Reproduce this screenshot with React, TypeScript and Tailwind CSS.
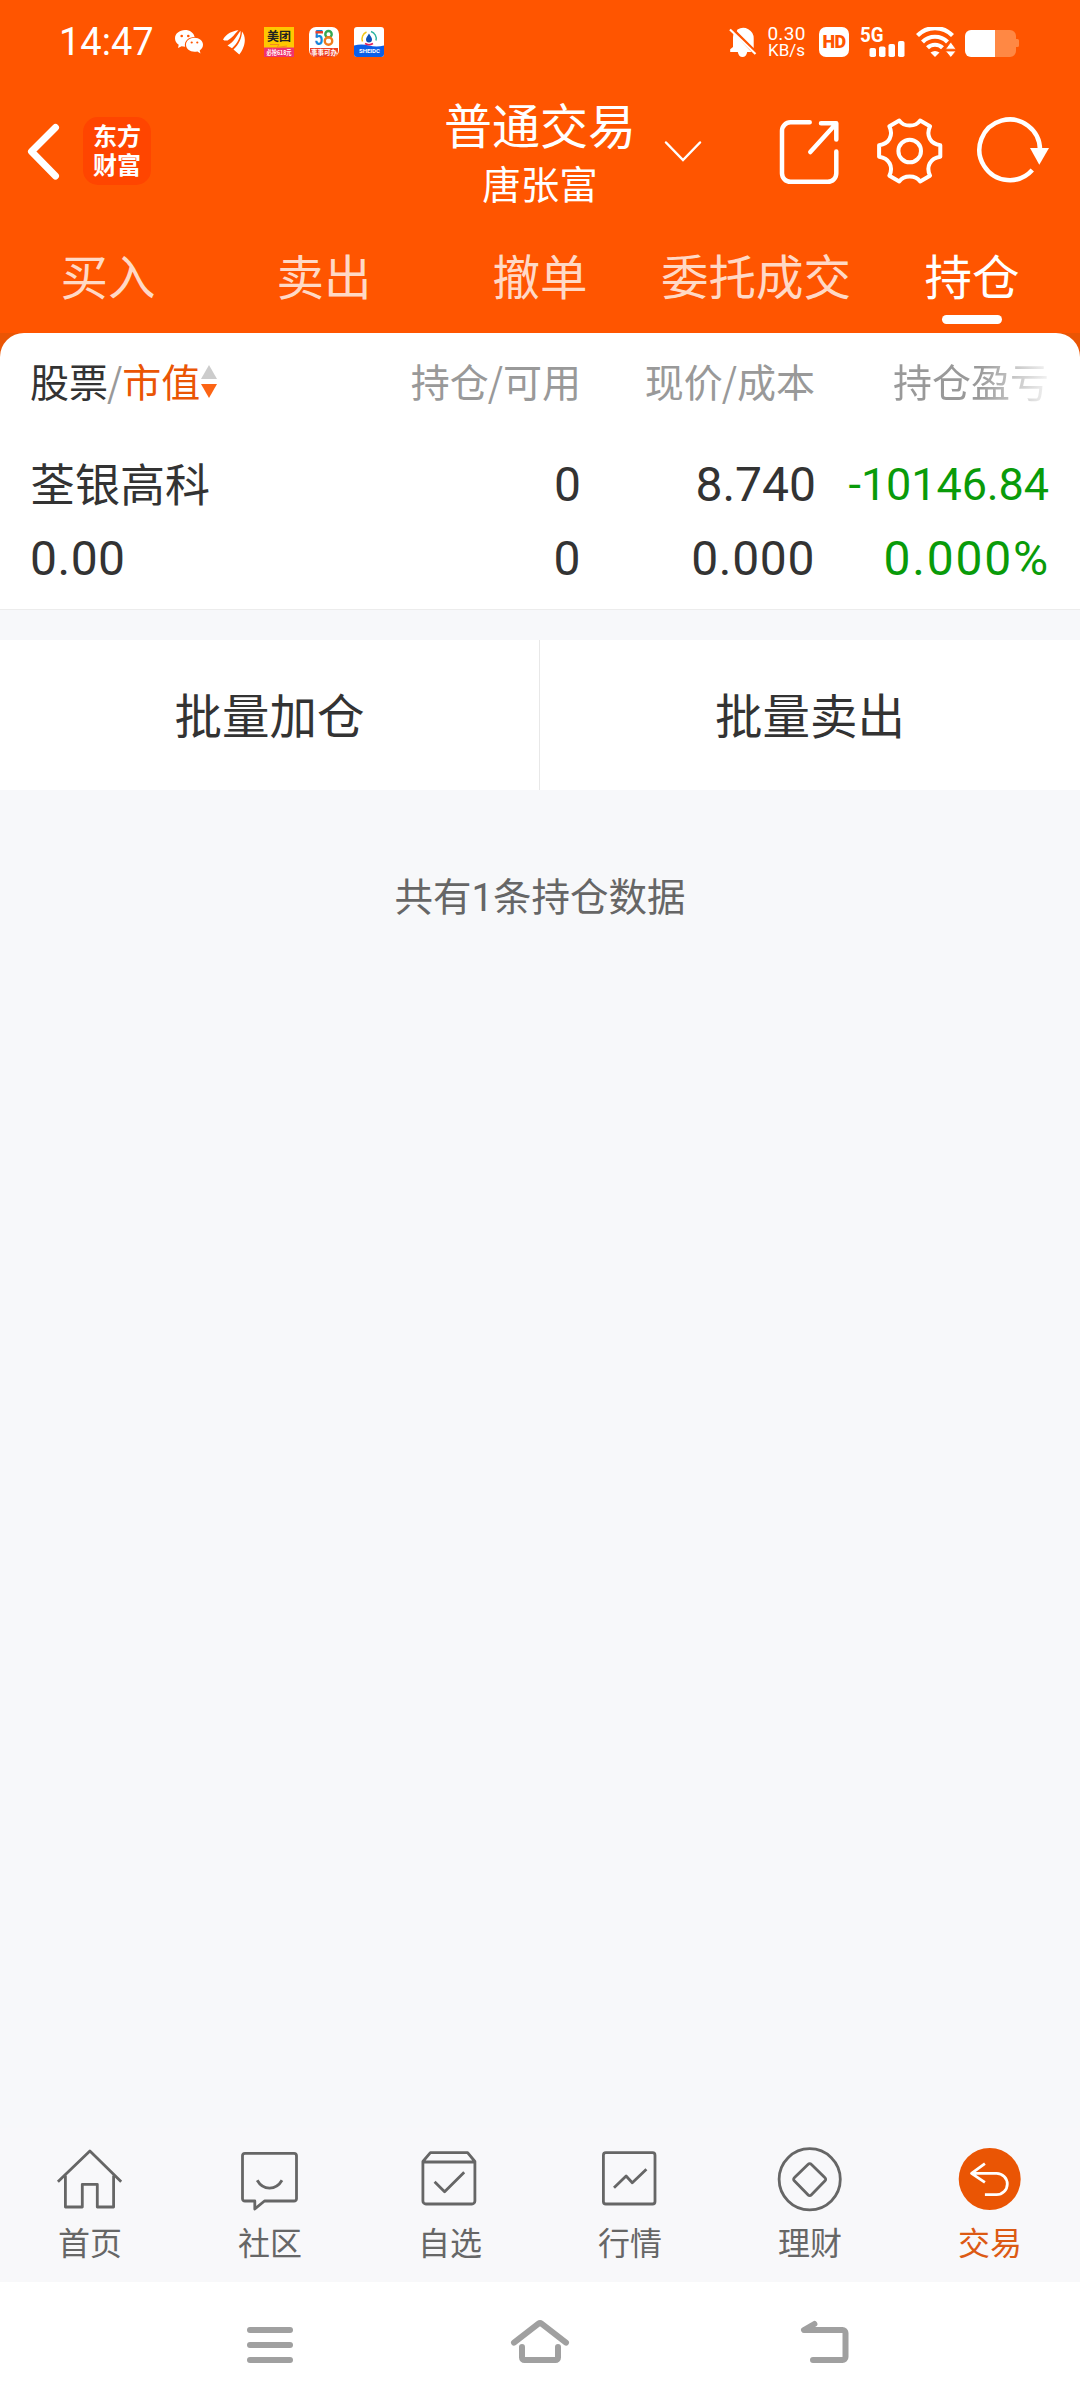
import type {ReactNode} from "react";

type Tab = {
    label: string;
    active?: boolean;
}

type NavItem = {
    label: string;
    icon: ReactNode;
    active?: boolean;
}

const tabs: Tab[] = [
    {label: "买入"},
    {label: "卖出"},
    {label: "撤单"},
    {label: "委托成交"},
    {label: "持仓", active: true},
];

const navItems: NavItem[] = [
    {
        label: "首页",
        icon: (
            <>
                <path d="M2.9 35.7 34.9 5l31.3 30.7"/>
                <path d="M10.4 29.5V61h16.9V38.3h15V61h16.3V29.5"/>
            </>
        ),
    },
    {
        label: "社区",
        icon: (
            <>
                <path d="M10 7.3h49a2.5 2.5 0 0 1 2.5 2.5v43A2.5 2.5 0 0 1 59 55H29.5l-9.7 8v-8H10a2.5 2.5 0 0 1-2.5-2.2v-43A2.5 2.5 0 0 1 10 7.3Z"/>
                <path d="M22.2 34.3c5.8 10.4 18.8 10.4 24.8 0"/>
            </>
        ),
    },
    {
        label: "自选",
        icon: (
            <>
                <path d="M7.9 15.5 15.4 6.7h37.2l7.3 8.8V55a3 3 0 0 1-3 3h-46a3 3 0 0 1-3-3ZM7.9 16h52"/>
                <path d="m19.6 35.7 10 10 19.6-19.4"/>
            </>
        ),
    },
    {
        label: "行情",
        icon: (
            <>
                <rect x="8.4" y="6.7" width="51.6" height="51.3" rx="2.5"/>
                <path d="M19 41.7 31.1 30l6.2 6.7 14.1-13.4"/>
            </>
        ),
    },
    {
        label: "理财",
        icon: (
            <>
                <circle cx="34.7" cy="33.3" r="30.6"/>
                <path d="M36.2 18.3 50 31.8a2 2 0 0 1 0 3L36.2 49a2 2 0 0 1-3 0L19.3 34.8a2 2 0 0 1 0-3l13.9-13.5a2 2 0 0 1 3 0Z"/>
            </>
        ),
    },
    {
        label: "交易",
        active: true,
        icon: (
            <>
                <circle cx="34.7" cy="33" r="31" fill="#ea5504" stroke="none"/>
                <path stroke="#fff" d="m29.9 17.7-13.4 9.6 13.4 9M16.5 27.3h25.1a10.7 10.7 0 0 1 0 21.4H29.9"/>
            </>
        ),
    },
];

function StatusBar() {
    return (
        <div className="flex h-[84px] items-center justify-between pl-[59px] pr-[61px] font-['Roboto',sans-serif] text-white">
            <div className="flex items-center">
                <span className="w-[116px] text-[38px] leading-[42px]">14:47</span>
                <svg width="28" height="24" viewBox="0 0 28 24" fill="#fff">
                    <path d="M10 0C4.500 0 0 3.600 0 8.300c0 2.700 1.400 5 3.700 6.500L3 18l3.600-1.800c1.200.3 2.300.5 3.500.5-1.300-5.500 3.500-9.700 9.500-9.700C18.800 2.700 14.900 0 10 0Z"/>
                    <path d="M19.500 7.800c-4.700 0-8.500 3.100-8.500 7s3.800 7 8.500 7c1 0 2-.1 2.900-.4L25.500 23.500l-.8-3c2-1.400 3.300-3.300 3.300-5.700 0-3.900-3.800-7-8.500-7Z"/>
                    <g fill="#ff5500">
                        <circle cx="6.700" cy="6" r="1.300"/>
                        <circle cx="13.300" cy="6" r="1.300"/>
                        <circle cx="16.700" cy="12.500" r="1.100"/>
                        <circle cx="22.300" cy="12.500" r="1.100"/>
                    </g>
                </svg>
                <svg className="ml-[20px]" width="22" height="25" viewBox="0 0 22 25" fill="#fff">
                    <path d="M0 9.500C4 3.500 9 1 15.500.3 12 3.500 10 7.500 4.500 10.500 2.500 10.500 1.500 11 0 9.500Z"/>
                    <path d="M4.500 15.500C11 12 13.500 6 17.500.8c.8 5-3 12.700-8.500 17.400Z"/>
                    <path d="M10.500 19.500C16 14.500 18.800 8 19 1.500c5.500 7 2 17-2.700 23Z"/>
                </svg>
                <svg className="ml-[19px] overflow-visible" width="30" height="30" viewBox="0 0 30 30">
                    <path fill="#ffc800" d="M0 0h30v22H0z"/>
                    <path fill="#f0326e" d="M0 20.500h30V30H0z"/>
                    <path d="M6 17.500h9l-2 3 10-1.500" stroke="#f58a1f" fill="none"/>
                    <text x="15" y="14" textAnchor="middle" fontSize="12" fontWeight="700" fill="#222"
                          fontFamily="Noto Sans CJK SC, sans-serif">美团</text>
                    <text x="15" y="27.700" textAnchor="middle" fontSize="6.500" fontWeight="700" fill="#fff"
                          fontFamily="Noto Sans CJK SC, sans-serif" textLength="25" lengthAdjust="spacingAndGlyphs">必抢618元</text>
                </svg>
                <svg className="ml-[15px] overflow-visible" width="30" height="30" viewBox="0 0 30 30">
                    <rect width="30" height="30" rx="7" fill="#fff"/>
                    <path fill="#ee4023" d="M1 21h28v3a6 6 0 0 1-6 6H7a6 6 0 0 1-6-6Z"/>
                    <text x="5.300" y="18.300" fontSize="20" fontWeight="700" fill="#1685d9"
                          fontFamily="Roboto, sans-serif" textLength="9" lengthAdjust="spacingAndGlyphs">5</text>
                    <path d="M6.500 5.300h7.500" stroke="#e8402a" strokeWidth="2.400"/>
                    <circle cx="19.500" cy="7.200" r="3.200" fill="none" stroke="#35a852" strokeWidth="2.400"/>
                    <circle cx="19.500" cy="14" r="3.700" fill="none" stroke="#f07c1c" strokeWidth="2.400"/>
                    <text x="15" y="28" textAnchor="middle" fontSize="6.500" fontWeight="700" fill="#fff"
                          fontFamily="Noto Sans CJK SC, sans-serif">事事可办</text>
                </svg>
                <svg className="ml-[15px]" width="30" height="30" viewBox="0 0 30 30">
                    <rect width="30" height="30" rx="3" fill="#fff"/>
                    <path fill="#0b5fe8" d="M0 18.500q7.500-2 15 0t15 0V27a3 3 0 0 1-3 3H3a3 3 0 0 1-3-3Z"/>
                    <g fill="none" strokeWidth="1.500">
                        <path d="M8.500 14.500a7.500 7.500 0 0 1 4-9.500" stroke="#f0c419"/>
                        <path d="M17 4.500a7.500 7.500 0 0 1 5 9" stroke="#2fb5a0"/>
                        <path d="M11 16.500a7.500 7.500 0 0 0 8 0" stroke="#e0245e"/>
                    </g>
                    <path fill="#0b4fb8" d="M15 6.500c1.800 3 3 4.300 3 6a3 3 0 0 1-6 0c0-1.700 1.200-3 3-6Z"/>
                    <text x="15.500" y="26.300" textAnchor="middle" fontSize="6" fontWeight="700" fill="#fff"
                          fontFamily="Roboto, sans-serif">SHEIDC</text>
                </svg>
            </div>
            <div className="flex items-center">
                <svg width="28" height="30" viewBox="0 0 28 30" fill="#fff">
                    <path d="M8.500 2.500a10.500 10.500 0 0 1 16.200 9V21L7.800 4.300c.2-.7.400-1.200.7-1.800Z"/>
                    <path d="M4 10.500c0-1.500.3-2.800.7-4L22.500 25h-4.300c-.5 3-2.200 5-4.700 5s-4.200-2-4.700-5H1.200v-2.800L4 20Z"/>
                    <path d="m1 2.500 25.500 24.500" stroke="#fff" strokeWidth="2.200"/>
                </svg>
                <div className="ml-[9px] flex w-[41px] flex-col items-center text-[19px] leading-[17px] tracking-[0.3px]">
                    <span>0.30</span>
                    <span className="text-[17px] tracking-normal">KB/s</span>
                </div>
                <div className="ml-[12px] flex size-[30px] items-center justify-center rounded-[7px] bg-white text-[18px] font-black leading-none tracking-[-0.6px] text-[#ff5500]">
                    HD
                </div>
                <svg className="ml-[11px] overflow-visible" width="46" height="30" viewBox="0 0 46 30" fill="#fff">
                    <text x="0" y="14.500" fontSize="19.500" fontWeight="700" fontFamily="Roboto, sans-serif"
                          textLength="23.500" lengthAdjust="spacingAndGlyphs">5G</text>
                    <rect x="9.500" y="21" width="6.500" height="9" rx="1.800"/>
                    <rect x="19" y="19.500" width="6.500" height="10.500" rx="1.800"/>
                    <rect x="28.500" y="17" width="6.500" height="13" rx="1.800"/>
                    <rect x="38" y="14" width="6.500" height="16" rx="1.800"/>
                </svg>
                <svg className="ml-[10px]" width="40" height="30" viewBox="0 0 40 30">
                    <g fill="none" stroke="#fff" strokeWidth="4.200">
                        <path d="M1.500 8.500a24.500 24.500 0 0 1 35 0"/>
                        <path d="M6.500 15a17.500 17.500 0 0 1 25 0"/>
                        <path d="M11.500 20.800a10.700 10.700 0 0 1 15 0"/>
                    </g>
                    <path fill="#fff" d="M14.500 25.500q4.500-3 9 0L19 30Z"/>
                    <path fill="#fff" stroke="#ff5500" strokeWidth=".800" d="M29.500 22.200 34.800 15l5.200 7.200ZM29.500 24 34.800 30.500 40 24Z"/>
                </svg>
                <svg className="ml-[9px]" width="54" height="30" viewBox="0 0 54 30">
                    <path fill="#ff8844" d="M30 3h15a6 6 0 0 1 6 6v3h1.500a1.500 1.500 0 0 1 1.500 1.500v5a1.500 1.500 0 0 1-1.500 1.500H51v4a6 6 0 0 1-6 6H30Z"/>
                    <path fill="#fff" d="M30 3H6a6 6 0 0 0-6 6v15a6 6 0 0 0 6 6h24Z"/>
                </svg>
            </div>
        </div>
    );
}

function TitleBar() {
    return (
        <div className="grid h-[132px] grid-cols-3 items-center pt-[2px] text-white">
            <div className="flex items-center pl-[25px]">
                <svg width="36" height="60" viewBox="0 0 36 60" fill="none" stroke="#fff" strokeWidth="7"
                     strokeLinecap="round" strokeLinejoin="round">
                    <path d="M30.500 6.500 6.500 30.500l24 24.500"/>
                </svg>
                <div className="ml-[22px] flex size-[68px] flex-col items-center justify-center rounded-[15px] bg-[#ff4500] pb-[5px] font-['Noto_Sans_CJK_SC',sans-serif] text-[24px] font-bold leading-[29px]">
                    <span>东方</span>
                    <span>财富</span>
                </div>
            </div>
            <div className="relative flex flex-col items-center">
                <span className="text-[48px] leading-[61px]">普通交易</span>
                <span className="text-[38.5px] leading-[56px]">唐张富</span>
                <svg className="absolute right-[17px] top-[46px]" width="40" height="24" viewBox="0 0 40 24" fill="none" stroke="#fff"
                     strokeWidth="2.500" strokeLinecap="round">
                    <path d="M3 3.500 20 21 37 3.500"/>
                </svg>
            </div>
            <div className="flex items-center justify-end pr-[27px]">
                <svg width="68" height="72" viewBox="0 0 68 72" fill="none" stroke="#fff" strokeWidth="4.500"
                     strokeLinecap="round" strokeLinejoin="round">
                    <path d="M34.700 7.300H15.500A8.500 8.500 0 0 0 7 15.800v42.500a8.500 8.500 0 0 0 8.500 8.500h37.300a8.500 8.500 0 0 0 8.500-8.500V36.500"/>
                    <path d="M46 8.300h15.300v16.200M35.300 37 61 8.800"/>
                </svg>
                <svg className="ml-[34px]" width="66" height="66" viewBox="0 0 66 66" fill="none" stroke="#fff" strokeWidth="4"
                     strokeLinejoin="round">
                    <path d="M22.300 2.500C24.500 5.800 28 7.600 32.700 7.600S40.900 5.800 43.100 2.500L53 8.300C50.800 13 50.800 17 52.800 20.700S58.500 26.500 63.300 27.200V38.800C58.500 39.500 54.800 41.600 52.800 45.300S50.800 53 53 57.700L43.100 63.500C40.900 60.200 37.400 58.400 32.700 58.400S24.500 60.200 22.300 63.500L12.400 57.700C14.600 53 14.600 49 12.600 45.300S6.900 39.500 2.100 38.800V27.200C6.900 26.500 10.600 24.400 12.600 20.700S14.600 13 12.400 8.300Z"/>
                    <circle cx="32.700" cy="33" r="11.300"/>
                </svg>
                <svg className="ml-[32px]" width="78" height="70" viewBox="0 0 78 70">
                    <path d="M65 34A30.300 30.300 0 1 0 57.300 54" fill="none" stroke="#fff" strokeWidth="4.500"/>
                    <path d="M55 32h19l-9.700 16.700Z" fill="#fff"/>
                </svg>
            </div>
        </div>
    );
}

function TradeTabs() {
    return (
        <div className="grid h-[117px] grid-cols-5">
            {tabs.map((tab) => (
                <div key={tab.label} className="flex flex-col items-center">
                    <span className={`mt-[29px] text-[47.5px] leading-[60px] ${tab.active ? "text-white" : "text-[#ffd9c6]"}`}>
                        {tab.label}
                    </span>
                    {tab.active && <div className="mt-[10px] h-[9px] w-[60px] rounded-full bg-white"/>}
                </div>
            ))}
        </div>
    );
}

function Slash() {
    return <span className="-ml-px">/</span>;
}

function Holdings() {
    return (
        <div className="bg-[#ea5504]">
            <div className="h-[277px] rounded-t-[24px] border-b border-[#ececec] bg-white px-[30px] text-[#333]">
                <div className="flex h-[98px] items-center pb-[4px] text-[39px] text-[#999]">
                    <div className="flex w-[281px] items-center">
                        <span className="text-[#333]">股票</span>
                        <Slash/>
                        <span className="text-[#ea5504]">市值</span>
                        <svg className="ml-px mt-[2px]" width="16" height="34" viewBox="0 0 16 34">
                            <path d="M8 1l8 14H0Z" fill="#ccc"/>
                            <path d="M0 20h16L8 34Z" fill="#fc6414"/>
                        </svg>
                    </div>
                    <span className="w-[270px] text-right">持仓<Slash/>可用</span>
                    <span className="w-[234px] text-right">现价<Slash/>成本</span>
                    <span className="w-[234px] bg-linear-to-r from-[#999] from-70% to-[#f4f4f4] to-100% bg-clip-text text-right text-transparent">
                        持仓盈亏
                    </span>
                </div>
                <div className="flex h-[106px] items-center pt-[2px] font-['Roboto','Noto_Sans_CJK_SC',sans-serif] text-[48px] leading-[60px]">
                    <span className="w-[281px] pt-[3px] text-[45px]">荃银高科</span>
                    <span className="w-[270px] text-right">0</span>
                    <span className="w-[235px] text-right">8.740</span>
                    <span className="w-[233px] whitespace-nowrap text-right text-[45px] tracking-[-0.1px] text-[#099b09]">-10146.84</span>
                </div>
                <div className="flex h-[42px] items-center pt-[2px] font-['Roboto',sans-serif] text-[48px] leading-[42px]">
                    <span className="w-[281px] tracking-[0.5px]">0.00</span>
                    <span className="w-[270px] text-right">0</span>
                    <span className="w-[235px] text-right tracking-[0.7px]">0.000</span>
                    <span className="w-[235px] text-right tracking-[1.8px] text-[#099b09]">0.000%</span>
                </div>
            </div>
        </div>
    );
}

function BottomNav() {
    return (
        <div className="grid h-[154px] grid-cols-6 bg-[#f8f8fa]">
            {navItems.map((item) => (
                <div key={item.label} className="flex flex-col items-center pt-[18px]">
                    <svg width="70" height="66" viewBox="0 0 70 66" fill="none" stroke="#666" strokeWidth="2.800"
                         strokeLinejoin="round">
                        {item.icon}
                    </svg>
                    <span className={`mt-[8px] text-[32px] leading-[42px] ${item.active ? "text-[#dc5a14]" : "text-[#666]"}`}>
                        {item.label}
                    </span>
                </div>
            ))}
        </div>
    );
}

function SystemNav() {
    return (
        <div className="flex h-[126px] justify-center bg-white pt-[34px]">
            <div className="flex w-[270px] justify-center">
                <div className="flex w-[46px] flex-col gap-[9px] pt-[11px]">
                    <div className="h-[6px] rounded-full bg-[#a0a0a0]"/>
                    <div className="h-[6px] rounded-full bg-[#a0a0a0]"/>
                    <div className="h-[6px] rounded-full bg-[#a0a0a0]"/>
                </div>
            </div>
            <div className="flex w-[270px] justify-center">
                <svg width="64" height="50" viewBox="0 0 64 50" fill="none" stroke="#a0a0a0" strokeWidth="6"
                     strokeLinecap="round" strokeLinejoin="round">
                    <path d="M6 26.700 30.500 7.600a2.500 2.500 0 0 1 3 0L58 26.700"/>
                    <path d="M14 31v10.500a2.500 2.500 0 0 0 2.500 2.500h31a2.500 2.500 0 0 0 2.500-2.500V31"/>
                </svg>
            </div>
            <div className="flex w-[270px] justify-center">
                <svg width="84" height="50" viewBox="0 0 84 50" fill="none" stroke="#a0a0a0" strokeWidth="6"
                     strokeLinecap="round" strokeLinejoin="round">
                    <path d="M46.400 8 36 14h38.500a3 3 0 0 1 3 3v24a3 3 0 0 1-3 3H45"/>
                </svg>
            </div>
        </div>
    );
}

function App() {
    return (
        <div className="flex h-[2408px] w-[1080px] flex-col overflow-hidden bg-[#f7f8fa] font-['Noto_Sans_CJK_SC',sans-serif]">
            <div className="h-[333px] bg-[#ff5500]">
                <StatusBar/>
                <TitleBar/>
                <TradeTabs/>
            </div>
            <Holdings/>
            <div className="mt-[30px] grid h-[150px] grid-cols-2 bg-white pb-[3px] text-[47.5px] text-[#333]">
                <div className="-mb-[3px] flex items-center justify-center border-r border-[#e8e8e8] pb-[3px]">批量加仓</div>
                <div className="flex items-center justify-center">批量卖出</div>
            </div>
            <div className="mt-[75px] text-center text-[38.5px] leading-[58px] text-[#666]">
                共有<span className="font-['Roboto',sans-serif]">1</span>条持仓数据
            </div>
            <div className="flex-1"/>
            <BottomNav/>
            <SystemNav/>
        </div>
    );
}

export default App;
